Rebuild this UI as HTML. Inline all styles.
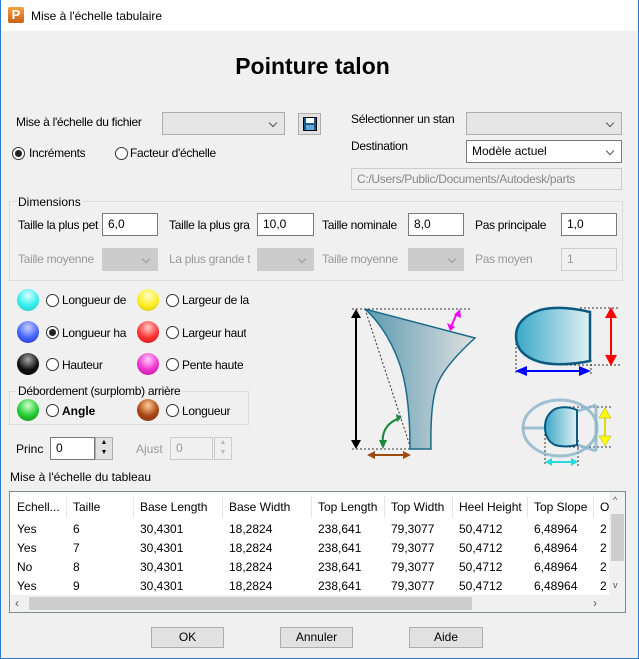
<!DOCTYPE html>
<html><head><meta charset="utf-8"><style>
*{box-sizing:border-box;margin:0;padding:0}
body{width:639px;height:659px;overflow:hidden;background:#f0f0f0;font-family:"Liberation Sans",sans-serif;font-size:12px;color:#000;position:relative}
.a{position:absolute;white-space:nowrap}
.win{position:absolute;left:0;top:0;width:639px;height:659px;border:1px solid #2b79d0;border-top:none}
.tb{position:absolute;left:0;top:0;width:639px;height:31px;background:#fff}
.in{position:absolute;background:#fff;border:1px solid #7a7a7a;padding:3px 5px}
.dis{background:#f0f0f0;border-color:#ccc;color:#999}
.cb{position:absolute;background:#e5e5e5;border:1px solid #adadad}
.cb:after{content:"";position:absolute;right:8px;top:7px;width:5px;height:5px;border-right:1px solid #555;border-bottom:1px solid #555;transform:rotate(45deg)}
.cbd{background:#ccc;border-color:#ccc}
.cbd:after{border-color:#999}
.rd{position:absolute;width:13px;height:13px;border:1px solid #333;border-radius:50%;background:#fff}
.rd.on:after{content:"";position:absolute;left:2px;top:2px;width:7px;height:7px;border-radius:50%;background:#222}
.ball{position:absolute;width:22px;height:22px;border-radius:50%}
.g{color:#999}
.btn{position:absolute;background:#e1e1e1;border:1px solid #adadad;text-align:center;line-height:19px}
.grp{position:absolute;border:1px solid #dcdcdc}
.clip{overflow:hidden;letter-spacing:-0.3px}
.col{position:absolute;top:0;height:103px;line-height:19px}
.col div:first-child{height:26px;line-height:26px;margin-top:2px}
.sep{position:absolute;top:4px;width:1px;height:22px;background:#e5e5e5}
</style></head><body>
<div class="tb"></div>
<div class="a" style="left:8px;top:7px;width:16px;height:16px;background:linear-gradient(#f6a040,#c8601a);border-radius:2px;color:#fff;font-weight:bold;font-size:13px;line-height:16px;text-align:center">P</div>
<div class="a" style="left:31px;top:9px;font-size:12px">Mise à l'échelle tabulaire</div>

<div class="a" style="left:0;width:625px;top:53px;text-align:center;font-size:23px;font-weight:bold">Pointure talon</div>

<div class="a clip" style="left:16px;top:115px">Mise à l'échelle du fichier</div>
<div class="cb" style="left:162px;top:112px;width:123px;height:23px"></div>
<div class="a" style="left:298px;top:113px;width:23px;height:22px;background:#e1e1e1;border:1px solid #adadad"><div style="position:absolute;left:4px;top:3px;width:14px;height:14px;background:#1a5a8a;border:1px solid #000"><div style="position:absolute;left:2px;top:0;width:8px;height:5px;background:#fff"></div><div style="position:absolute;left:2px;top:7px;width:8px;height:5px;background:#6ad"></div></div></div>
<div class="rd on" style="left:12px;top:147px"></div><div class="a clip" style="left:29px;top:146px">Incréments</div>
<div class="rd" style="left:115px;top:147px"></div><div class="a clip" style="left:130px;top:146px;width:86px">Facteur d'échelle</div>

<div class="a clip" style="left:351px;top:112px">Sélectionner un stan</div>
<div class="cb" style="left:466px;top:112px;width:156px;height:23px"></div>
<div class="a clip" style="left:351px;top:139px">Destination</div>
<div class="cb" style="left:466px;top:140px;width:156px;height:23px;background:#fff;border-color:#7a7a7a"></div>
<div class="a" style="left:472px;top:144px">Modèle actuel</div>
<div class="in dis clip" style="left:351px;top:168px;width:271px;height:22px;border-color:#ccc;color:#888">C:/Users/Public/Documents/Autodesk/parts</div>

<div class="grp" style="left:9px;top:201px;width:614px;height:80px"></div>
<div class="a" style="left:16px;top:195px;background:#f0f0f0;padding:0 2px">Dimensions</div>
<div class="a clip" style="left:18px;top:218px;width:84px">Taille la plus pet</div>
<div class="in" style="left:102px;top:213px;width:56px;height:23px">6,0</div>
<div class="a clip" style="left:169px;top:218px;width:86px">Taille la plus gra</div>
<div class="in" style="left:257px;top:213px;width:57px;height:23px">10,0</div>
<div class="a clip" style="left:322px;top:218px;width:84px">Taille nominale</div>
<div class="in" style="left:408px;top:213px;width:56px;height:23px">8,0</div>
<div class="a clip" style="left:475px;top:218px">Pas principale</div>
<div class="in" style="left:561px;top:213px;width:56px;height:23px">1,0</div>
<div class="a g clip" style="left:18px;top:252px;width:82px">Taille moyenne</div>
<div class="cb cbd" style="left:102px;top:248px;width:56px;height:23px"></div>
<div class="a g clip" style="left:169px;top:252px;width:86px">La plus grande t</div>
<div class="cb cbd" style="left:257px;top:248px;width:57px;height:23px"></div>
<div class="a g clip" style="left:322px;top:252px;width:84px">Taille moyenne</div>
<div class="cb cbd" style="left:408px;top:248px;width:56px;height:23px"></div>
<div class="a g clip" style="left:475px;top:252px">Pas moyen</div>
<div class="in dis" style="left:561px;top:248px;width:56px;height:23px">1</div>

<div class="ball" style="left:17px;top:289px;background:radial-gradient(circle at 50% 30%,#dff,#3ee 55%,#2bb)"></div>
<div class="rd" style="left:46px;top:294px"></div><div class="a clip" style="left:62px;top:293px;width:68px">Longueur de</div>
<div class="ball" style="left:137px;top:289px;background:radial-gradient(circle at 50% 30%,#ffc,#fe2 55%,#cb0)"></div>
<div class="rd" style="left:166px;top:294px"></div><div class="a clip" style="left:182px;top:293px;width:68px">Largeur de la</div>
<div class="ball" style="left:17px;top:321px;background:radial-gradient(circle at 50% 30%,#ccf,#46f 55%,#22b)"></div>
<div class="rd on" style="left:46px;top:326px"></div><div class="a clip" style="left:62px;top:326px;width:68px">Longueur ha</div>
<div class="ball" style="left:137px;top:321px;background:radial-gradient(circle at 50% 30%,#fcc,#f33 55%,#b11)"></div>
<div class="rd" style="left:166px;top:326px"></div><div class="a clip" style="left:182px;top:326px">Largeur haut</div>
<div class="ball" style="left:17px;top:353px;background:radial-gradient(circle at 50% 30%,#aaa,#111 55%,#000)"></div>
<div class="rd" style="left:46px;top:358px"></div><div class="a clip" style="left:62px;top:358px">Hauteur</div>
<div class="ball" style="left:137px;top:353px;background:radial-gradient(circle at 50% 30%,#fcf,#e3c 55%,#a19)"></div>
<div class="rd" style="left:166px;top:358px"></div><div class="a clip" style="left:182px;top:358px">Pente haute</div>

<div class="grp" style="left:9px;top:391px;width:240px;height:34px"></div>
<div class="a clip" style="left:16px;top:384px;background:#f0f0f0;padding:0 2px">Débordement (surplomb) arrière</div>
<div class="ball" style="left:17px;top:399px;background:radial-gradient(circle at 50% 30%,#cfc,#2c3 55%,#181)"></div>
<div class="rd" style="left:46px;top:404px"></div><div class="a" style="left:62px;top:404px;font-weight:bold">Angle</div>
<div class="ball" style="left:137px;top:399px;background:radial-gradient(circle at 50% 30%,#fc9,#a41 55%,#731)"></div>
<div class="rd" style="left:166px;top:404px"></div><div class="a clip" style="left:182px;top:404px">Longueur</div>

<div class="a" style="left:16px;top:442px">Princ</div>
<div class="in" style="left:50px;top:437px;width:45px;height:23px">0</div>
<div class="a" style="left:95px;top:437px;width:18px;height:23px;background:#e1e1e1;border:1px solid #adadad;font-size:7px;line-height:10px;text-align:center">▲<br>▼</div>
<div class="a g" style="left:136px;top:442px">Ajust</div>
<div class="in dis" style="left:170px;top:437px;width:43px;height:23px">0</div>
<div class="a" style="left:214px;top:437px;width:18px;height:23px;background:#f0f0f0;border:1px solid #ccc;color:#bbb;font-size:7px;line-height:10px;text-align:center">▲<br>▼</div>

<svg class="a" style="left:340px;top:295px" width="295" height="180" viewBox="340 295 295 180">
<defs>
<linearGradient id="h" x1="0" x2="1"><stop offset="0" stop-color="#5a9ab0"/><stop offset="1" stop-color="#e0e0e0"/></linearGradient>
<linearGradient id="c" x1="0" x2="1"><stop offset="0" stop-color="#3aa8c8"/><stop offset="1" stop-color="#e0f0f4"/></linearGradient>
</defs>
<g stroke="#333" stroke-dasharray="2,2" fill="none" stroke-width="1">
<line x1="352" y1="309" x2="472" y2="309"/><line x1="365" y1="309" x2="411" y2="449"/>
<line x1="352" y1="449" x2="411" y2="449"/>
<line x1="580" y1="308" x2="620" y2="308"/><line x1="566" y1="365" x2="620" y2="365"/>
<line x1="516" y1="335" x2="516" y2="375"/><line x1="591" y1="360" x2="591" y2="375"/>
<line x1="565" y1="407" x2="612" y2="407"/><line x1="565" y1="447" x2="612" y2="447"/>
<line x1="545" y1="430" x2="545" y2="466"/><line x1="578" y1="440" x2="578" y2="466"/>
</g>
<path d="M365 309 L475 338 Q445 365 437 385 Q430 405 431 449 L410 449 Q410 395 400 365 Q388 330 365 309 Z" fill="url(#h)" stroke="#1a6a8a" stroke-width="1.5"/>
<path d="M356 312 V446" stroke="#000" stroke-width="2"/><path d="M351 318 L356 309 L361 318 Z M351 440 L356 449 L361 440Z" fill="#000"/>
<path d="M451 327 L457 313" stroke="#f0f" stroke-width="2"/><path d="M447 323 L450 331 L455 327Z M454 315 L460 309 L461 318Z" fill="#f0f"/>
<path d="M383 446 Q380 425 400 418" stroke="#1a8a3a" stroke-width="2" fill="none"/><path d="M379 440 L383 449 L387 440Z M396 414 L402 417 L397 422Z" fill="#1a8a3a"/>
<path d="M370 455 H408" stroke="#a04a10" stroke-width="2"/><path d="M367 455 L375 451 L375 459Z M411 455 L403 451 L403 459Z" fill="#a04a10"/>
<path d="M590 312 Q560 305 540 310 Q516 318 516 336 Q516 355 540 362 Q560 367 590 361 Z" fill="url(#c)" stroke="#0a5a80" stroke-width="2.5"/>
<path d="M611 312 V361" stroke="#f00" stroke-width="2"/><path d="M605 318 L611 307 L617 318Z M605 355 L611 366 L617 355Z" fill="#f00"/>
<path d="M520 371 H587" stroke="#00f" stroke-width="2"/><path d="M515 371 L527 366 L527 376Z M591 371 L579 366 L579 376Z" fill="#00f"/>
<ellipse cx="560" cy="428" rx="37" ry="28" fill="none" stroke="#8ab4c8" stroke-width="3" opacity=".8"/>
<path d="M523 428 H546 M578 411 L596 405 M578 445 L596 451 M596 405 V451" stroke="#8ab4c8" stroke-width="3" fill="none" opacity=".8"/>
<path d="M577 410 Q565 405 555 409 Q545 415 545 427 Q545 440 555 445 Q565 448 577 445 Z" fill="url(#c)" stroke="#0a5a80" stroke-width="2"/>
<path d="M605 411 V443" stroke="#dd0" stroke-width="2"/><path d="M599 418 L605 408 L611 418Z M599 436 L605 446 L611 436Z" fill="#ff0" stroke="#aa0" stroke-width=".5"/>
<path d="M549 462 H574" stroke="#2dd" stroke-width="2"/><path d="M545 462 L552 458 L552 466Z M578 462 L571 458 L571 466Z" fill="#2dd"/>
</svg>

<div class="a" style="left:10px;top:470px">Mise à l'échelle du tableau</div>
<div class="a" style="left:9px;top:491px;width:617px;height:122px;background:#fff;border:1px solid #828790;overflow:hidden">
<div class="sep" style="left:56px"></div><div class="sep" style="left:123px"></div><div class="sep" style="left:212px"></div><div class="sep" style="left:301px"></div><div class="sep" style="left:374px"></div><div class="sep" style="left:442px"></div><div class="sep" style="left:517px"></div><div class="sep" style="left:583px"></div>
<div class="col" style="left:7px"><div>Echell...</div><div>Yes</div><div>Yes</div><div>No</div><div>Yes</div></div>
<div class="col" style="left:63px"><div>Taille</div><div>6</div><div>7</div><div>8</div><div>9</div></div>
<div class="col" style="left:130px"><div>Base Length</div><div>30,4301</div><div>30,4301</div><div>30,4301</div><div>30,4301</div></div>
<div class="col" style="left:219px"><div>Base Width</div><div>18,2824</div><div>18,2824</div><div>18,2824</div><div>18,2824</div></div>
<div class="col" style="left:308px"><div>Top Length</div><div>238,641</div><div>238,641</div><div>238,641</div><div>238,641</div></div>
<div class="col" style="left:381px"><div>Top Width</div><div>79,3077</div><div>79,3077</div><div>79,3077</div><div>79,3077</div></div>
<div class="col" style="left:449px"><div>Heel Height</div><div>50,4712</div><div>50,4712</div><div>50,4712</div><div>50,4712</div></div>
<div class="col" style="left:524px"><div>Top Slope</div><div>6,48964</div><div>6,48964</div><div>6,48964</div><div>6,48964</div></div>
<div class="col" style="left:590px"><div>O</div><div>2</div><div>2</div><div>2</div><div>2</div></div>
<div class="a" style="left:599px;top:0;width:17px;height:103px;background:#f0f0f0"><div style="position:absolute;left:2px;top:22px;width:13px;height:47px;background:#cdcdcd"></div><div style="position:absolute;left:4px;top:3px;font-size:9px;color:#555">^</div><div style="position:absolute;left:4px;top:88px;font-size:9px;color:#555">v</div></div>
<div class="a" style="left:0;top:103px;width:616px;height:17px;background:#f0f0f0"><div style="position:absolute;left:19px;top:2px;width:443px;height:13px;background:#cdcdcd"></div><div style="position:absolute;left:5px;top:1px;color:#555">‹</div><div style="position:absolute;left:583px;top:1px;color:#555">›</div></div>
</div>

<div class="btn" style="left:151px;top:627px;width:73px;height:21px">OK</div>
<div class="btn" style="left:280px;top:627px;width:73px;height:21px">Annuler</div>
<div class="btn" style="left:409px;top:627px;width:74px;height:21px">Aide</div>
<div class="win"></div>
</body></html>
